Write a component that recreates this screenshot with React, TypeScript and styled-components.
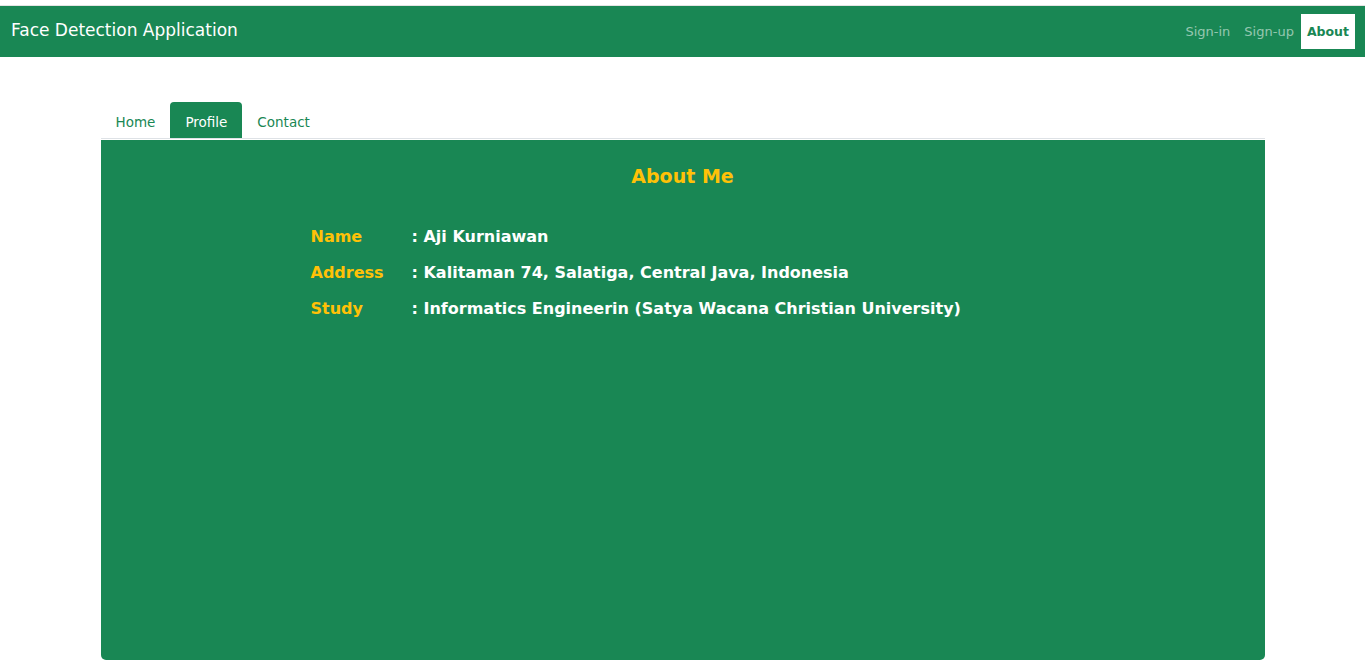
import React from "react";
import styled, { createGlobalStyle } from "styled-components";

const Global = createGlobalStyle`
  html, body { margin: 0; padding: 0; background: #fff; }
  body { font-family: "Comic Sans MS", "DejaVu Sans", sans-serif; }
  * { box-sizing: border-box; }
`;

const FONT = `"Comic Sans MS", "DejaVu Sans", sans-serif`;
const GREEN = "#198754";
const YELLOW = "#ffc107";

const TopStrip = styled.div`
  height: 6px;
  border-bottom: 1px solid #e4e4e4;
`;

const Header = styled.header`
  height: 51px;
  background: ${GREEN};
  display: flex;
  align-items: center;
  justify-content: space-between;
  padding: 0 10px 0 11px;
`;

const Brand = styled.div`
  font-family: ${FONT};
  color: #fff;
  font-size: 17px;
  margin-top: -3px;
`;

const Nav = styled.nav`
  display: flex;
  align-items: center;
`;

const NavLink = styled.a<{ $active?: boolean }>`
  font-family: ${FONT};
  text-decoration: none;
  padding: 0 ${(p) => (p.$active ? 6 : 7)}px;
  height: 35px;
  display: flex;
  align-items: center;
  color: ${(p) => (p.$active ? GREEN : "rgba(255,255,255,0.55)")};
  background: ${(p) => (p.$active ? "#fff" : "transparent")};
  font-weight: ${(p) => (p.$active ? 700 : 400)};
  font-size: ${(p) => (p.$active ? 12.5 : 13)}px;
`;

const Container = styled.main`
  width: 1164px;
  margin: 45px auto 0;
`;

const Tabs = styled.div`
  display: flex;
  border-bottom: 1px solid #dee2e6;
  height: 37px;
`;

const Tab = styled.div<{ $active?: boolean }>`
  font-family: ${FONT};
  font-size: 13.5px;
  padding: 3px 15px 0;
  height: 36px;
  display: flex;
  align-items: center;
  border-radius: 4px 4px 0 0;
  color: ${(p) => (p.$active ? "#fff" : GREEN)};
  background: ${(p) => (p.$active ? GREEN : "transparent")};
`;

const Panel = styled.section`
  background: ${GREEN};
  height: 520px;
  border-radius: 0 0 5px 5px;
  margin-top: 1px;
  padding-top: 25px;
`;

const Title = styled.h2`
  font-family: ${FONT};
  color: ${YELLOW};
  font-size: 19px;
  font-weight: 700;
  text-align: center;
  margin: 0 0 38px;
`;

const Table = styled.div`
  margin-left: 210px;
  display: grid;
  grid-template-columns: 101px auto;
  row-gap: 12px;
`;

const Label = styled.div`
  font-family: ${FONT};
  color: ${YELLOW};
  font-weight: 700;
  font-size: 16px;
  line-height: 24px;
`;

const Value = styled.div`
  font-family: ${FONT};
  color: #fff;
  font-weight: 700;
  font-size: 16px;
  line-height: 24px;
`;

const rows = [
  ["Name", "Aji Kurniawan"],
  ["Address", "Kalitaman 74, Salatiga, Central Java, Indonesia"],
  ["Study", "Informatics Engineerin (Satya Wacana Christian University)"],
];

export default function App() {
  return (
    <>
      <Global />
      <TopStrip />
      <Header>
        <Brand>Face Detection Application</Brand>
        <Nav>
          <NavLink>Sign-in</NavLink>
          <NavLink>Sign-up</NavLink>
          <NavLink $active>About</NavLink>
        </Nav>
      </Header>
      <Container>
        <Tabs>
          <Tab>Home</Tab>
          <Tab $active>Profile</Tab>
          <Tab>Contact</Tab>
        </Tabs>
        <Panel>
          <Title>About Me</Title>
          <Table>
            {rows.map(([l, v]) => (
              <React.Fragment key={l}>
                <Label>{l}</Label>
                <Value>: {v}</Value>
              </React.Fragment>
            ))}
          </Table>
        </Panel>
      </Container>
    </>
  );
}
